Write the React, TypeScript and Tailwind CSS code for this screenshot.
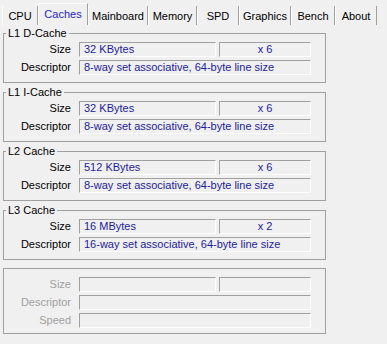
import React from "react";

const tabs = [
  { name: "CPU", w: "w-[36px]" },
  { name: "Caches", w: "w-[50px]" },
  { name: "Mainboard", w: "w-[60px]" },
  { name: "Memory", w: "w-[49px]" },
  { name: "SPD", w: "w-[42px]" },
  { name: "Graphics", w: "w-[52px]" },
  { name: "Bench", w: "w-[44px]" },
  { name: "About", w: "w-[42px]" },
];

const caches = [
  { title: "L1 D-Cache", size: "32 KBytes", count: "x 6", desc: "8-way set associative, 64-byte line size" },
  { title: "L1 I-Cache", size: "32 KBytes", count: "x 6", desc: "8-way set associative, 64-byte line size" },
  { title: "L2 Cache", size: "512 KBytes", count: "x 6", desc: "8-way set associative, 64-byte line size" },
  { title: "L3 Cache", size: "16 MBytes", count: "x 2", desc: "16-way set associative, 64-byte line size" },
];

const Field: React.FC<{ className?: string; text?: string; center?: boolean }> = ({ className, text, center }) => (
  <div
    className={`h-[15px] border-t border-l border-t-[#a0a0a0] border-l-[#a0a0a0] border-b border-r border-b-white border-r-white px-[4px] leading-[13px] text-[#1c1c9c] whitespace-nowrap overflow-hidden ${
      center ? "text-center" : ""
    } ${className ?? ""}`}
  >
    {text}
  </div>
);

const Label: React.FC<{ text: string; disabled?: boolean }> = ({ text, disabled }) => (
  <div className={`w-[67px] mr-[8px] text-right leading-[15px] ${disabled ? "text-[#a0a0a0]" : "text-black"}`}>{text}</div>
);

const App: React.FC = () => {
  return (
    <div
      className="w-[387px] h-[344px] bg-[#f0f0f0] text-[11px] overflow-hidden"
      style={{ fontFamily: '"Liberation Sans", Arial, sans-serif' }}
    >
      <div className="flex items-end h-[25px] pl-[2px]">
        {tabs.map((t) =>
          t.name === "Caches" ? (
            <div
              key={t.name}
              className={`${t.w} h-[22px] border-l border-t border-white border-r border-r-[#a0a0a0] text-center text-[#1f1fd0] leading-[14px] pt-[3px]`}
            >
              {t.name}
            </div>
          ) : (
            <div
              key={t.name}
              className={`${t.w} h-[19px] border-l border-l-white border-r border-r-[#a0a0a0] text-center leading-[14px] pt-[3px]`}
            >
              {t.name}
            </div>
          )
        )}
      </div>

      <div className="pl-[3px] w-[326px] mt-[2px] flex flex-col gap-[3px]">
        {caches.map((c) => (
          <fieldset key={c.title} className="border border-[#a0a0a0] h-[56px]">
            <legend className="ml-[2px] px-[2px] leading-[12px]">{c.title}</legend>
            <div className="flex flex-col gap-[3px] mt-[3px]">
              <div className="flex">
                <Label text="Size" />
                <Field className="w-[137px]" text={c.size} />
                <Field className="w-[92px] ml-[3px]" text={c.count} center />
              </div>
              <div className="flex">
                <Label text="Descriptor" />
                <Field className="w-[232px]" text={c.desc} />
              </div>
            </div>
          </fieldset>
        ))}
        <fieldset className="border border-[#a0a0a0] h-[66px] mt-[5px] pt-[8px]">
          <div className="flex flex-col gap-[3px]">
            <div className="flex">
              <Label text="Size" disabled />
              <Field className="w-[137px]" />
              <Field className="w-[92px] ml-[3px]" />
            </div>
            <div className="flex">
              <Label text="Descriptor" disabled />
              <Field className="w-[232px]" />
            </div>
            <div className="flex">
              <Label text="Speed" disabled />
              <Field className="w-[232px]" />
            </div>
          </div>
        </fieldset>
      </div>
    </div>
  );
};

export default App;
